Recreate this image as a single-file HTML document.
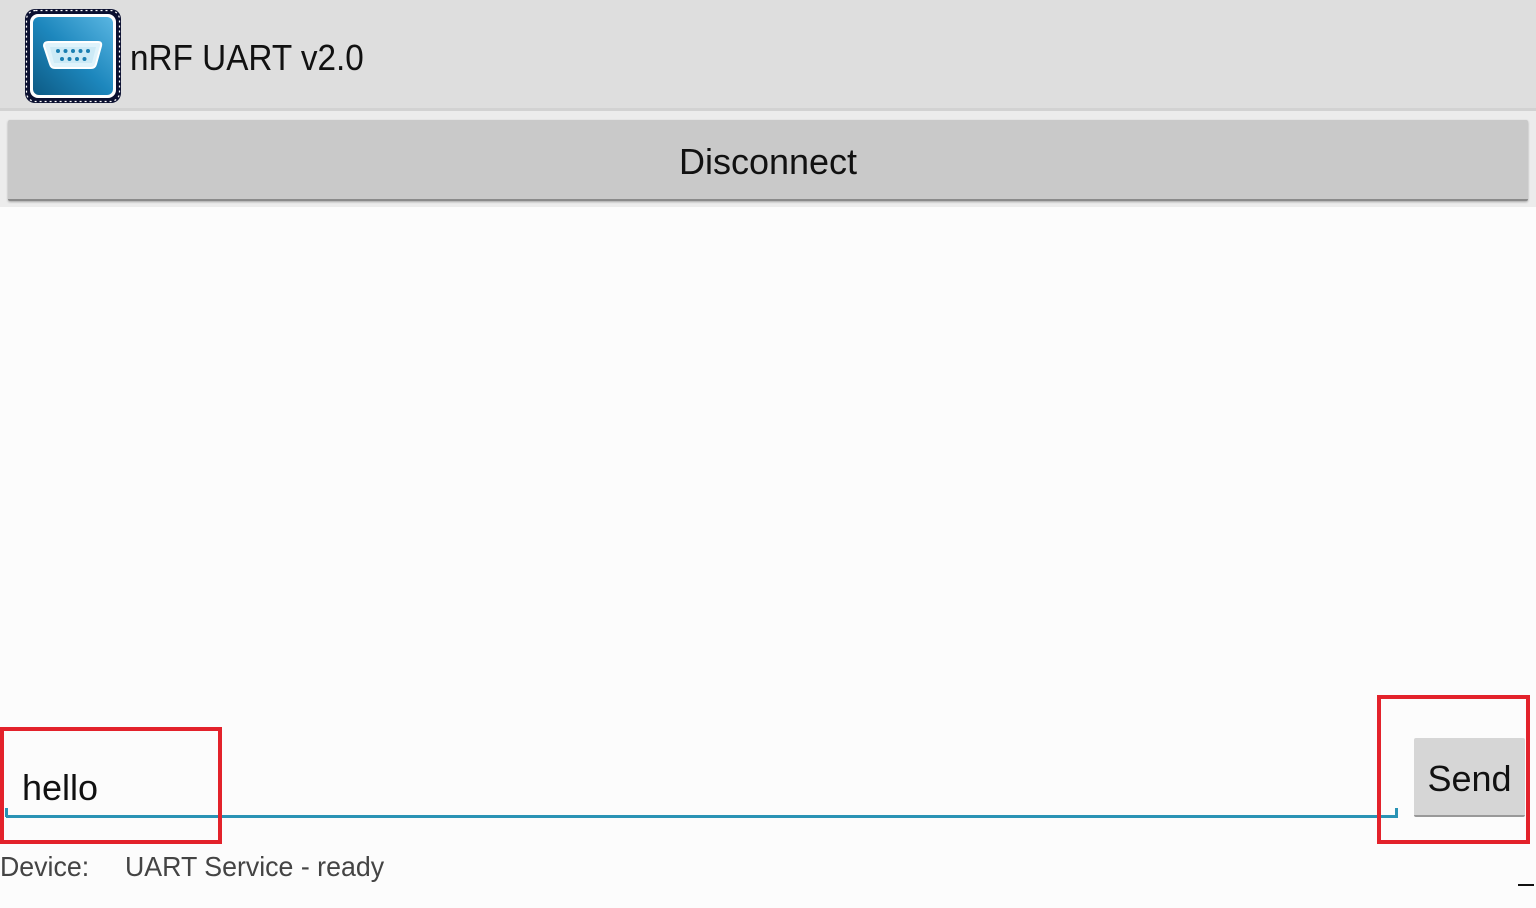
<!DOCTYPE html>
<html><head><meta charset="utf-8"><style>
html,body{margin:0;padding:0;width:1536px;height:908px;overflow:hidden;background:#fcfcfc;font-family:"Liberation Sans",Roboto,sans-serif;position:relative}
.hdr{position:absolute;left:0;top:0;width:1536px;height:108px;background:#dedede;border-bottom:3px solid #d2d2d2}
.title{position:absolute;left:130px;top:37px;font-size:36px;color:#111;line-height:42px;transform:scaleX(0.925);transform-origin:left}
.strip{position:absolute;left:0;top:111px;width:1536px;height:96px;background:#ececec}
.btn{position:absolute;left:8px;top:120px;width:1520px;height:79px;background:#c9c9c9;border-bottom:2px solid #8a8a8a;box-shadow:0 1px 2px rgba(0,0,0,.3);text-align:center;font-size:36px;line-height:84px;color:#111;border-radius:2px}
.line{position:absolute;left:6px;top:815px;width:1392px;height:3px;background:#2a93b5}
.tl{position:absolute;left:5px;top:808px;width:3px;height:9px;background:#2a93b5}
.tr{position:absolute;left:1395px;top:808px;width:3px;height:9px;background:#2a93b5}
.hello{position:absolute;left:22px;top:767px;font-size:36px;line-height:42px;color:#111}
.send{position:absolute;left:1414px;top:738px;width:111px;height:77px;background:#d6d6d6;border-bottom:2px solid #999;font-size:36px;line-height:82px;text-align:center;color:#111;border-radius:2px}
.red{position:absolute;border:4px solid #e3222b;box-sizing:border-box}
.dev{position:absolute;top:850px;font-size:28px;line-height:34px;color:#444;transform:scaleX(0.955);transform-origin:left}
</style></head><body>
<div class="hdr"></div>
<svg style="position:absolute;left:24px;top:8px" width="98" height="96" viewBox="0 0 98 96">
<defs><linearGradient id="g" x1="1" y1="0" x2="0" y2="1"><stop offset="0" stop-color="#5ab6e2"/><stop offset="0.5" stop-color="#1d87bd"/><stop offset="1" stop-color="#0d5a84"/></linearGradient></defs>
<rect x="1" y="1" width="96" height="94" rx="10" fill="#0b1030"/>
<rect x="2.5" y="2.5" width="93" height="91" rx="9" fill="none" stroke="#fff" stroke-width="1.2" stroke-dasharray="2 3"/>
<rect x="6" y="6" width="86" height="84" rx="8" fill="#fff"/>
<rect x="9" y="9" width="80" height="78" rx="6" fill="url(#g)"/>
<path d="M20 38 Q20 34 24 34 L74 34 Q78 34 77 38 L72 56 Q71 60 67 60 L31 60 Q27 60 26 56 Z" fill="#dff3fb" stroke="#fff" stroke-width="2"/>
<path d="M26 39 L72 39 L68 55 L30 55 Z" fill="#cdeaf6"/>
<g fill="#1a7fb2"><circle cx="34" cy="43" r="2"/><circle cx="41.5" cy="43" r="2"/><circle cx="49" cy="43" r="2"/><circle cx="56.5" cy="43" r="2"/><circle cx="64" cy="43" r="2"/><circle cx="38" cy="51" r="2"/><circle cx="45.5" cy="51" r="2"/><circle cx="53" cy="51" r="2"/><circle cx="60.5" cy="51" r="2"/></g>
</svg>
<div class="title">nRF UART v2.0</div>
<div class="strip"></div>
<div class="btn">Disconnect</div>
<div class="hello">hello</div>
<div class="line"></div><div class="tl"></div><div class="tr"></div>
<div class="send">Send</div>
<div class="red" style="left:0;top:727px;width:222px;height:117px"></div>
<div class="red" style="left:1377px;top:695px;width:153px;height:149px"></div>
<div class="dev" style="left:0">Device:</div>
<div class="dev" style="left:125px">UART Service - ready</div>
<div style="position:absolute;left:1518px;top:884px;width:16px;height:2px;background:#111"></div>
</body></html>
